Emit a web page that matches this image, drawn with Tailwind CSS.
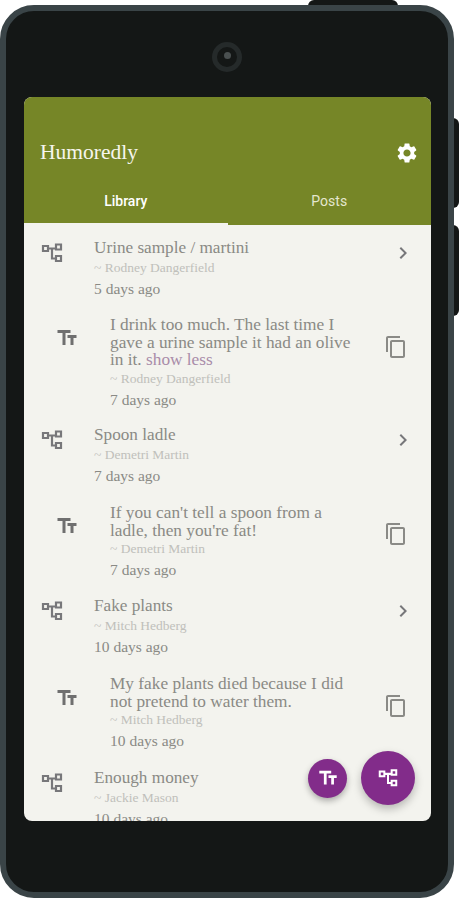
<!DOCTYPE html>
<html><head><meta charset="utf-8"><script src="https://cdn.jsdelivr.net/npm/@tailwindcss/browser@4"></script></head>
<body class="bg-white w-[459px] h-[900px] overflow-hidden relative font-['Liberation_Serif',serif]">
<svg width="0" height="0" class="absolute"><defs>
<symbol id="tree" viewBox="0 0 24 24"><path fill="none" stroke="currentColor" stroke-width="2.200" d="M3 5h5v5H3zM16 3.500h5v5h-5zM16 15h5v5h-5zM8 7.500h8M12 7.500v10h4"/></symbol>
<symbol id="tt" viewBox="0 0 24 24"><path fill="currentColor" d="M2.500 4v3h5v12h3V7h5V4zm19 5h-9v3h3v7h3v-7h3z"/></symbol>
<symbol id="copy" viewBox="0 0 24 24"><path fill="currentColor" d="M16 1H4c-1.100 0-2 .9-2 2v14h2V3h12V1zm3 4H8c-1.100 0-2 .9-2 2v14c0 1.100.9 2 2 2h11c1.100 0 2-.9 2-2V7c0-1.100-.9-2-2-2zm0 16H8V7h11v14z"/></symbol>
<symbol id="chev" viewBox="0 0 24 24"><path fill="currentColor" d="M10 6 8.590 7.410 13.170 12l-4.580 4.590L10 18l6-6z"/></symbol>
</defs></svg>

<div class="absolute left-[308px] top-0 w-[90px] h-[8px] bg-[#141716] rounded-t-md"></div>
<div class="absolute left-[450px] top-[118px] w-[9px] h-[90px] bg-[#141716] rounded-r-md"></div>
<div class="absolute left-[450px] top-[225px] w-[9px] h-[91px] bg-[#141716] rounded-r-md"></div>

<div class="absolute left-0 top-[5px] w-[454px] h-[893px] bg-[#141716] border-[6px] border-[#3a4447] rounded-[34px] flex flex-col items-center">
  <div class="mt-[31px] w-[30px] h-[30px] rounded-full border-[5px] border-[#252a2a] flex items-center justify-center"><div class="w-[7px] h-[7px] rounded-full bg-[#4a5050] -mt-[3px]"></div></div>
  <div class="absolute left-[18px] top-[86px] w-[407px] h-[724px] rounded-[8px] overflow-hidden bg-[#f3f3ee] flex flex-col">
    <div class="bg-[#768627] h-[128px] shrink-0 flex flex-col">
      <div class="h-[84px] flex items-end justify-between pl-[16px] pr-[12px] pb-[15px]">
        <span class="text-[#f6f6ee] text-[21.500px] leading-[28px]">Humoredly</span>
        <svg viewBox="0 0 24 24" class="w-[24px] h-[24px] mb-[1px] text-white"><path fill="currentColor" d="M19.140 12.940c.04-.3.06-.61.06-.94 0-.32-.02-.64-.07-.94l2.030-1.580a.49.49 0 0 0 .12-.61l-1.920-3.320a.49.49 0 0 0-.59-.22l-2.390.96c-.5-.38-1.030-.7-1.620-.94l-.36-2.540a.484.484 0 0 0-.48-.41h-3.840c-.24 0-.43.17-.47.41l-.36 2.540c-.59.24-1.130.57-1.620.94l-2.390-.96a.49.49 0 0 0-.59.22L2.740 8.870c-.12.21-.08.47.12.61l2.030 1.580c-.05.3-.09.63-.09.94s.02.64.07.94l-2.030 1.580a.49.49 0 0 0-.12.61l1.920 3.320c.12.22.37.29.59.22l2.390-.96c.5.38 1.030.7 1.620.94l.36 2.540c.05.24.24.41.48.41h3.840c.24 0 .44-.17.47-.41l.36-2.540c.59-.24 1.130-.56 1.620-.94l2.390.96c.22.08.47 0 .59-.22l1.920-3.320c.12-.22.07-.47-.12-.61l-2.010-1.580zM12 15.600c-1.980 0-3.600-1.620-3.600-3.600s1.620-3.600 3.600-3.600 3.600 1.620 3.600 3.600-1.620 3.600-3.600 3.600z"/></svg>
      </div>
      <div class="flex-1 flex font-['Roboto',sans-serif] text-[14px]">
        <div class="w-1/2 flex items-center justify-center text-white font-medium border-b-2 border-[#f3f3ee] pb-[1px]">Library</div>
        <div class="w-1/2 flex items-center justify-center text-[#e4e6cf] pb-[3px]">Posts</div>
      </div>
    </div>
    <div class="flex-1 overflow-hidden text-[#8a8a85] relative">
      <div class="h-[78px] flex pt-[13px]">
        <svg class="w-[24px] h-[24px] ml-[16px] mt-[3px] text-[#77777a]"><use href="#tree"/></svg>
        <div class="ml-[30px] flex-1">
          <div class="text-[17.200px] leading-[20px]">Urine sample / martini</div>
          <div class="text-[13.500px] leading-[20px] text-[#c0c0bb]">~ Rodney Dangerfield</div>
          <div class="text-[15.500px] leading-[21px] text-[#8a8a85]">5 days ago</div>
        </div>
        <svg class="w-[24px] h-[24px] mr-[16px] mt-[3px] text-[#77777a]"><use href="#chev"/></svg>
      </div>
      <div class="h-[110px] flex pt-[13px]">
        <svg class="w-[24px] h-[24px] ml-[31px] mt-[10px] text-[#6f6f6f]"><use href="#tt"/></svg>
        <div class="ml-[31px] w-[265px]">
          <div class="text-[17.300px] leading-[17.500px]">I drink too much. The last time I<br>gave a urine sample it had an olive<br>in it. <span class="text-[#a98ca9]">show less</span></div>
          <div class="text-[13.500px] leading-[20px] text-[#c0c0bb]">~ Rodney Dangerfield</div>
          <div class="text-[15.500px] leading-[21px] text-[#8a8a85]">7 days ago</div>
        </div>
        <svg class="w-[24px] h-[24px] ml-[9px] mt-[19px] text-[#8a8a86]"><use href="#copy"/></svg>
      </div>
      <div class="h-[78px] flex pt-[12px]">
        <svg class="w-[24px] h-[24px] ml-[16px] mt-[3px] text-[#77777a]"><use href="#tree"/></svg>
        <div class="ml-[30px] flex-1">
          <div class="text-[17.200px] leading-[20px]">Spoon ladle</div>
          <div class="text-[13.500px] leading-[20px] text-[#c0c0bb]">~ Demetri Martin</div>
          <div class="text-[15.500px] leading-[21px] text-[#8a8a85]">7 days ago</div>
        </div>
        <svg class="w-[24px] h-[24px] mr-[16px] mt-[3px] text-[#77777a]"><use href="#chev"/></svg>
      </div>
      <div class="h-[93px] flex pt-[13px]">
        <svg class="w-[24px] h-[24px] ml-[31px] mt-[10px] text-[#6f6f6f]"><use href="#tt"/></svg>
        <div class="ml-[31px] w-[265px]">
          <div class="text-[17.300px] leading-[17.500px]">If you can't tell a spoon from a<br>ladle, then you're fat!</div>
          <div class="text-[13.500px] leading-[20px] text-[#c0c0bb]">~ Demetri Martin</div>
          <div class="text-[15.500px] leading-[21px] text-[#8a8a85]">7 days ago</div>
        </div>
        <svg class="w-[24px] h-[24px] ml-[9px] mt-[18px] text-[#8a8a86]"><use href="#copy"/></svg>
      </div>
      <div class="h-[78px] flex pt-[12px]">
        <svg class="w-[24px] h-[24px] ml-[16px] mt-[3px] text-[#77777a]"><use href="#tree"/></svg>
        <div class="ml-[30px] flex-1">
          <div class="text-[17.200px] leading-[20px]">Fake plants</div>
          <div class="text-[13.500px] leading-[20px] text-[#c0c0bb]">~ Mitch Hedberg</div>
          <div class="text-[15.500px] leading-[21px] text-[#8a8a85]">10 days ago</div>
        </div>
        <svg class="w-[24px] h-[24px] mr-[16px] mt-[3px] text-[#77777a]"><use href="#chev"/></svg>
      </div>
      <div class="h-[93px] flex pt-[13px]">
        <svg class="w-[24px] h-[24px] ml-[31px] mt-[11px] text-[#6f6f6f]"><use href="#tt"/></svg>
        <div class="ml-[31px] w-[265px]">
          <div class="text-[17.300px] leading-[17.500px]">My fake plants died because I did<br>not pretend to water them.</div>
          <div class="text-[13.500px] leading-[20px] text-[#c0c0bb]">~ Mitch Hedberg</div>
          <div class="text-[15.500px] leading-[21px] text-[#8a8a85]">10 days ago</div>
        </div>
        <svg class="w-[24px] h-[24px] ml-[9px] mt-[19px] text-[#8a8a86]"><use href="#copy"/></svg>
      </div>
      <div class="h-[78px] flex pt-[13px]">
        <svg class="w-[24px] h-[24px] ml-[16px] mt-[3px] text-[#77777a]"><use href="#tree"/></svg>
        <div class="ml-[30px] flex-1">
          <div class="text-[17.200px] leading-[20px]">Enough money</div>
          <div class="text-[13.500px] leading-[20px] text-[#c0c0bb]">~ Jackie Mason</div>
          <div class="text-[15.500px] leading-[21px] text-[#8a8a85]">10 days ago</div>
        </div>
      </div>
      <div class="absolute right-[16px] bottom-[16px] flex items-center gap-[14px]">
        <div class="w-[39px] h-[39px] rounded-full bg-[#822c8a] shadow-[0_3px_6px_rgba(0,0,0,0.3)] flex items-center justify-center text-white"><svg class="w-[22px] h-[22px]"><use href="#tt"/></svg></div>
        <div class="w-[54px] h-[54px] rounded-full bg-[#822c8a] shadow-[0_4px_8px_rgba(0,0,0,0.25)] flex items-center justify-center text-white"><svg class="w-[22px] h-[22px]"><use href="#tree"/></svg></div>
      </div>
    </div>
  </div>
</div>
</body></html>
